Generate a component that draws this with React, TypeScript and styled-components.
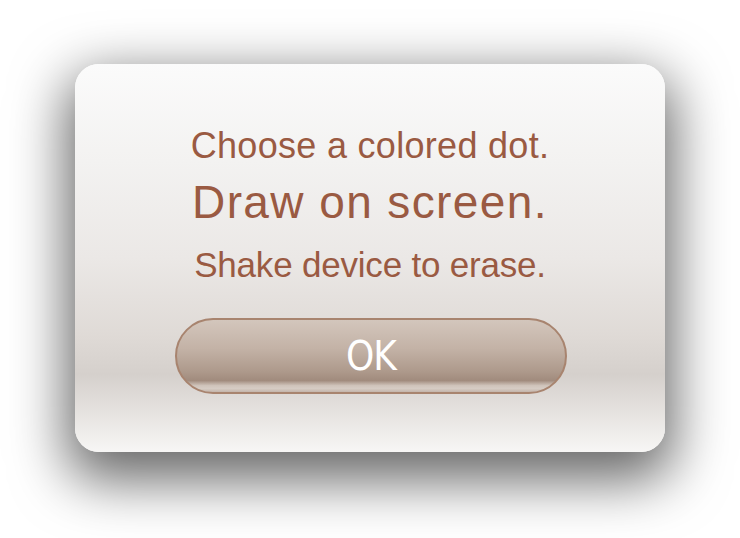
import React from "react";
import styled, { createGlobalStyle } from "styled-components";

const GlobalStyle = createGlobalStyle`
  html, body {
    margin: 0;
    padding: 0;
    background: #ffffff;
  }
  body {
    font-family: "Liberation Sans", Arial, sans-serif;
  }
`;

const Page = styled.div`
  width: 740px;
  height: 538px;
  box-sizing: border-box;
  padding: 64px 75px 0 75px;
  overflow: hidden;
`;

const Card = styled.div`
  width: 590px;
  height: 388px;
  box-sizing: border-box;
  border-radius: 24px;
  padding-top: 64px;
  display: flex;
  flex-direction: column;
  align-items: center;
  background: linear-gradient(
    to bottom,
    #fbfbfb 0%,
    #f3f2f1 25%,
    #ebe8e6 50%,
    #dfdad6 70%,
    #d5d0cc 80%,
    #e6e3e0 90%,
    #f7f6f5 100%
  );
  box-shadow: 0 20px 55px 8px rgba(0, 0, 0, 0.6);
`;

const Line = styled.div<{ $size: number; $gap: number; $track: number }>`
  font-family: "Liberation Sans", Arial, sans-serif;
  font-size: ${(p) => p.$size}px;
  letter-spacing: ${(p) => p.$track}px;
  line-height: 1;
  margin-top: ${(p) => p.$gap}px;
  color: #9a5a42;
  white-space: nowrap;
`;

const OkButton = styled.button`
  margin-top: 36px;
  margin-left: 2px;
  width: 392px;
  height: 76px;
  box-sizing: border-box;
  border-radius: 38px;
  border: 2px solid #a8846f;
  padding: 0;
  display: flex;
  align-items: center;
  justify-content: center;
  background: linear-gradient(
    to bottom,
    #d3c6bc 0%,
    #c3b2a6 40%,
    #ad998b 72%,
    #a18b7d 84%,
    #cfc3ba 91%,
    #d6ccc4 95%,
    #c4b5ab 100%
  );
  font-family: "DejaVu Sans Condensed", "Liberation Sans Narrow", "Liberation Sans", Arial, sans-serif;
  font-stretch: condensed;
  font-size: 40px;
  line-height: 1;
  letter-spacing: -1px;
  color: #ffffff;
  cursor: pointer;
`;

export default function App() {
  return (
    <>
      <GlobalStyle />
      <Page>
        <Card>
          <Line $size={36} $gap={0} $track={0.3}>Choose a colored dot.</Line>
          <Line $size={46} $gap={15} $track={1.4}>Draw on screen.</Line>
          <Line $size={35} $gap={22} $track={-0.2}>Shake device to erase.</Line>
          <OkButton>OK</OkButton>
        </Card>
      </Page>
    </>
  );
}
